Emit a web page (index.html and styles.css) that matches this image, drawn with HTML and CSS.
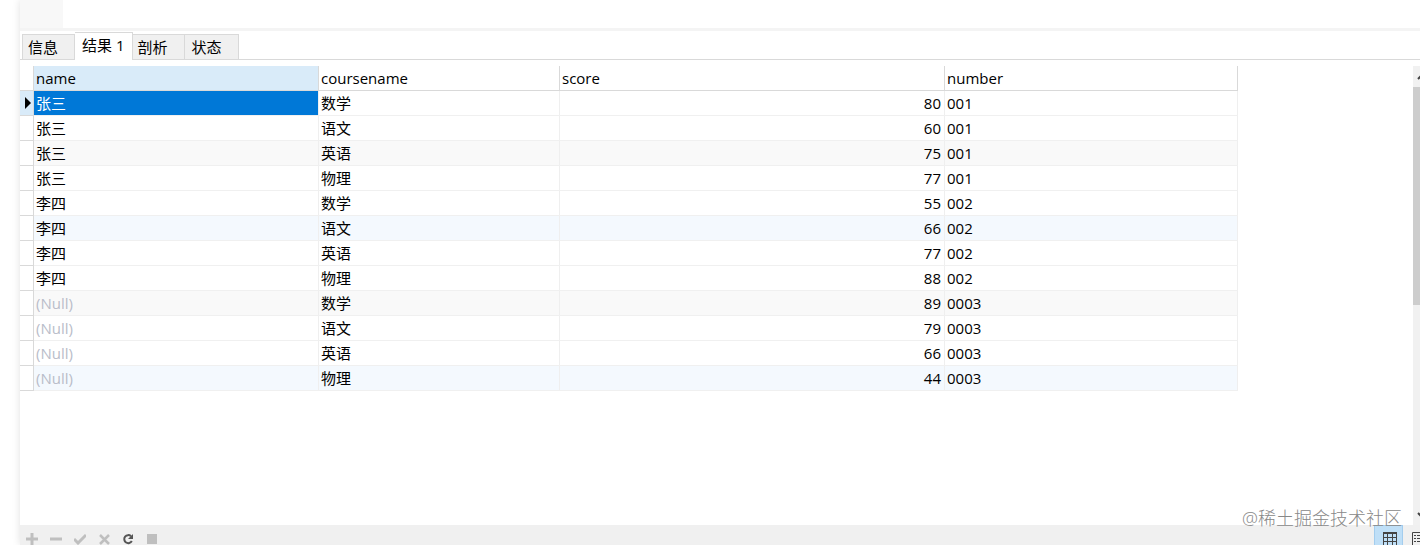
FILE: index.html
```html
<!DOCTYPE html>
<html lang="zh-CN">
<head>
    <meta charset="UTF-8">
    <meta name="viewport" content="width=device-width, initial-scale=1.0">
    <title>结果 1</title>
    <link rel="stylesheet" href="styles.css">
</head>
<body>
    <div class="window">
        <div class="editor">
            <div class="gutter"></div>
        </div>

        <div class="tabs" role="tablist">
            <button class="tab" role="tab">信息</button>
            <button class="tab active" role="tab" aria-selected="true">结果 1</button>
            <button class="tab" role="tab">剖析</button>
            <button class="tab" role="tab">状态</button>
        </div>

        <div class="result">
            <div class="grid-area">
                <table class="grid">
                    <colgroup>
                        <col class="col-mark">
                        <col class="col-name">
                        <col class="col-course">
                        <col class="col-score">
                        <col class="col-number">
                    </colgroup>
                    <thead>
                        <tr><td></td><th class="sorted">name</th><th>coursename</th><th>score</th><th>number</th></tr>
                    </thead>
                    <tbody>
                        <tr>
                            <td class="current"><svg class="pointer" viewBox="0 0 6 12"><path d="M0 0l6 6-6 6z"/></svg></td>
                            <td class="selected">张三</td><td>数学</td><td class="num">80</td><td>001</td>
                        </tr>
                        <tr><td></td><td>张三</td><td>语文</td><td class="num">60</td><td>001</td></tr>
                        <tr class="gray"><td></td><td>张三</td><td>英语</td><td class="num">75</td><td>001</td></tr>
                        <tr><td></td><td>张三</td><td>物理</td><td class="num">77</td><td>001</td></tr>
                        <tr><td></td><td>李四</td><td>数学</td><td class="num">55</td><td>002</td></tr>
                        <tr class="blue"><td></td><td>李四</td><td>语文</td><td class="num">66</td><td>002</td></tr>
                        <tr><td></td><td>李四</td><td>英语</td><td class="num">77</td><td>002</td></tr>
                        <tr><td></td><td>李四</td><td>物理</td><td class="num">88</td><td>002</td></tr>
                        <tr class="gray"><td></td><td class="null">(Null)</td><td>数学</td><td class="num">89</td><td>0003</td></tr>
                        <tr><td></td><td class="null">(Null)</td><td>语文</td><td class="num">79</td><td>0003</td></tr>
                        <tr><td></td><td class="null">(Null)</td><td>英语</td><td class="num">66</td><td>0003</td></tr>
                        <tr class="blue"><td></td><td class="null">(Null)</td><td>物理</td><td class="num">44</td><td>0003</td></tr>
                    </tbody>
                </table>
            </div>
            <div class="scrollbar">
                <svg class="arrow" viewBox="0 0 10 6"><path d="M1 5l4-4 4 4"/></svg>
                <div class="thumb"></div>
                <svg class="arrow" viewBox="0 0 10 6"><path d="M1 1l4 4 4-4"/></svg>
            </div>
            <div class="watermark">@稀土掘金技术社区</div>
        </div>

        <div class="toolbar">
            <div class="actions">
                <button class="action" aria-label="添加记录"><svg viewBox="0 0 12 12"><path d="M6 0v12M0 6h12" stroke-width="3"/></svg></button>
                <button class="action" aria-label="删除记录"><svg viewBox="0 0 12 12"><path d="M0 6h12" stroke-width="3"/></svg></button>
                <button class="action" aria-label="应用更改"><svg viewBox="0 0 12 12"><path d="M0 6l4 4 8-8" stroke-width="3"/></svg></button>
                <button class="action" aria-label="放弃更改"><svg viewBox="0 0 12 12"><path d="M2 2l9 9M11 2l-9 9" stroke-width="2.5"/></svg></button>
                <button class="action enabled" aria-label="刷新"><svg viewBox="0 0 12 12"><path d="M9 3.2A4 4 0 1 0 9.8 8" stroke-width="2"/><path d="M11 1v5H6z" class="fill"/></svg></button>
                <button class="action" aria-label="停止"><svg viewBox="0 0 12 12"><path d="M1 1h10v10H1z" class="fill"/></svg></button>
            </div>
            <div class="views">
                <button class="view active" aria-label="网格视图"><svg viewBox="0 0 14 14"><path d="M0 1h14" stroke-width="2"/><path d="M.5 0v14M4.5 0v14M9.5 0v14M13.5 0v14M0 5.5h14M0 9.5h14M0 13.5h14"/></svg></button>
                <button class="view" aria-label="表单视图"><svg viewBox="0 0 14 14"><path d="M.5 .5h13v13H.5z"/><path d="M2 3.5h2M5 3.5h7M2 6.5h2M5 6.5h7M2 9.5h2M5 9.5h7"/></svg></button>
            </div>
        </div>
    </div>
</body>
</html>
```
FILE: styles.css
```css
* {
    box-sizing: border-box;
    margin: 0;
    padding: 0;
}

body {
    font-family: "Open Sans", "Noto Sans CJK SC", sans-serif;
    font-size: 15px;
    line-height: 24px;
    color: #000;
    background: #fff;
    overflow: hidden;
}

button {
    font: inherit;
    color: inherit;
    background: none;
    border: none;
}

.window {
    display: flex;
    flex-direction: column;
    height: 100vh;
    margin-left: 20px;
    box-shadow: 0 0 8px rgba(0, 0, 0, 0.12);
}

.editor {
    display: flex;
    height: 31px;
    border-bottom: 3px solid #f4f4f4;
}

.gutter {
    width: 43px;
    background: #f8f8f8;
}

.tabs {
    display: flex;
    align-items: flex-end;
    height: 29px;
    padding-left: 2px;
    border-bottom: 1px solid #d9d9d9;
}

.tab {
    height: 25px;
    padding: 0 16px 0 5px;
    background: #f0f0f0;
    border: 1px solid #d9d9d9;
    border-width: 1px 1px 0 1px;
    white-space: nowrap;
}

.tab + .tab {
    border-left: none;
}

.tab:last-child {
    padding-left: 7px;
}

.tab.active {
    height: 28px;
    padding: 0 7px 3px;
    margin-bottom: -1px;
    background: #fff;
}

.result {
    position: relative;
    display: flex;
    flex: 1;
    min-height: 0;
    padding-top: 6px;
}

.grid-area {
    flex: 1;
    min-width: 0;
    overflow: hidden;
}

.grid {
    width: 1218px;
    table-layout: fixed;
    border-collapse: separate;
    border-spacing: 0;
}

.col-mark {
    width: 14px;
}

.col-name {
    width: 285px;
}

.col-course {
    width: 241px;
}

.col-score {
    width: 385px;
}

.grid th,
.grid td {
    height: 25px;
    padding: 0 2px;
    border-right: 1px solid #efefef;
    border-bottom: 1px solid #f0f0f0;
    font-weight: normal;
    text-align: left;
    white-space: nowrap;
}

.grid th,
.grid thead td,
.grid td:first-child {
    border-color: #d9d9d9;
}

.grid .num {
    padding-right: 3px;
    text-align: right;
}

.grid .sorted {
    background: #d9ebf9;
}

.grid .current {
    padding: 0 0 0 5px;
    background: #d9ebf9;
}

.grid .selected {
    color: #fff;
    background: #0078d7;
}

.grid .null {
    color: #b9bdc9;
}

.gray td + td {
    background: #f9f9f9;
}

.blue td + td {
    background: #f4f9fe;
}

.pointer {
    display: block;
    width: 6px;
    height: 12px;
}

.scrollbar {
    display: flex;
    flex-direction: column;
    width: 7px;
    background: #f1f1f1;
    overflow: hidden;
}

.arrow {
    flex: none;
    width: 10px;
    height: 6px;
    margin: 8px 0 7px 4px;
    fill: none;
    stroke: #444;
    stroke-width: 2;
}

.thumb {
    height: 218px;
    margin-bottom: auto;
    background: #cdcdcd;
}

.watermark {
    position: absolute;
    right: 18px;
    bottom: -5px;
    font-size: 18px;
    font-weight: 300;
    color: #888;
}

.toolbar {
    display: flex;
    justify-content: space-between;
    height: 20px;
    padding-left: 6px;
    background: #f0f0f0;
    overflow: hidden;
}

.actions {
    display: flex;
    gap: 12px;
    padding-top: 8px;
}

.action {
    width: 12px;
    height: 12px;
    color: #bfbfbf;
}

.action.enabled {
    color: #555;
}

.action svg {
    display: block;
    fill: none;
    stroke: currentColor;
}

.action .fill {
    fill: currentColor;
    stroke: none;
}

.views {
    display: flex;
    width: 46px;
}

.view {
    flex: none;
    width: 29px;
    height: 28px;
    padding: 0 6px 0 8px;
    border: 1px solid transparent;
}

.view.active {
    background: #bfdff7;
    border-color: #a3cdee;
}

.view svg {
    display: block;
    width: 14px;
    height: 14px;
    fill: none;
    stroke: #444;
}
```
